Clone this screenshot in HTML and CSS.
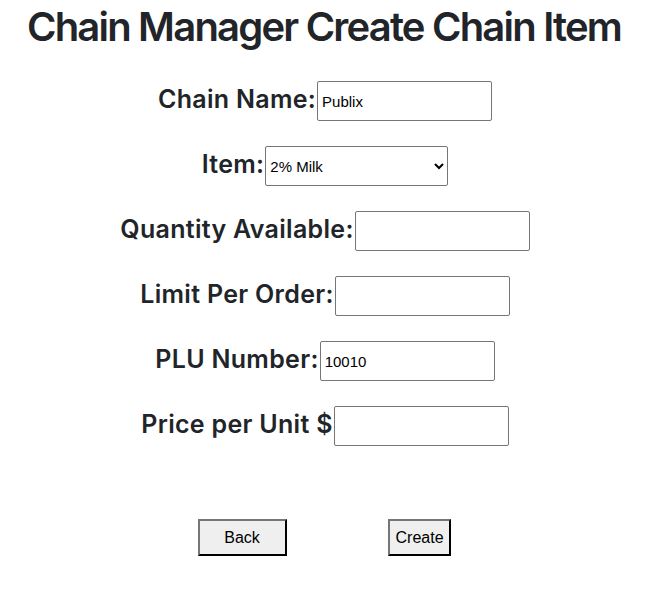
FILE: index.html
```html
<!DOCTYPE html>
<html>
<head>
<meta charset="utf-8">
<link rel="stylesheet" href="styles.css">
</head>
<body>
<div class="page">
  <h1 class="title">Chain Manager Create Chain Item</h1>
  <form class="form">
    <div class="row"><label class="lbl">Chain Name:</label><input class="field" type="text" value="Publix"></div>
    <div class="row"><label class="lbl">Item:</label><select class="select"><option>2% Milk</option></select></div>
    <div class="row"><label class="lbl">Quantity Available:</label><input class="field" type="text"></div>
    <div class="row"><label class="lbl">Limit Per Order:</label><input class="field" type="text"></div>
    <div class="row"><label class="lbl">PLU Number:</label><input class="field" type="text" value="10010"></div>
    <div class="row"><label class="lbl">Price per Unit $</label><input class="field" type="text"></div>
  </form>
  <div class="actions">
    <button class="btn btn-back" type="button">Back</button>
    <button class="btn btn-create" type="button">Create</button>
  </div>
</div>
</body>
</html>
```
FILE: styles.css
```css
html, body {
  margin: 0;
  padding: 0;
  background: #fff;
}
.page {
  width: 654px;
  font-family: Inter, "Noto Sans", sans-serif;
  color: #212529;
}
.title {
  margin: 0;
  padding-top: 3px;
  padding-right: 6px;
  text-align: center;
  font-size: 40px;
  font-weight: 600;
  line-height: 48px;
  letter-spacing: -1.8px;
}
.form {
  display: flex;
  flex-direction: column;
  gap: 25px;
  margin-top: 30px;
  align-items: center;
  padding-right: 4px;
}
.row {
  display: flex;
  align-items: center;
  justify-content: center;
  height: 40px;
}
.lbl {
  font-size: 25px;
  font-weight: 600;
  line-height: 29px;
  margin-top: -3px;
  letter-spacing: 0.3px;
}
.field {
  box-sizing: border-box;
  width: 175px;
  height: 40px;
  border: 1px solid #767676;
  border-radius: 2px;
  padding: 0 4px;
  font-family: "Liberation Sans", Arial, sans-serif;
  font-size: 15px;
  color: #000;
  margin: 0 0 0 1px;
}
.select {
  box-sizing: border-box;
  width: 183px;
  height: 40px;
  border: 1px solid #767676;
  border-radius: 2px;
  font-family: "Liberation Sans", Arial, sans-serif;
  font-size: 15px;
  color: #000;
  background: #fff;
  margin-left: 1px;
}
.actions {
  display: flex;
  justify-content: center;
  gap: 101px;
  margin-top: 73px;
  padding-right: 6px;
}
.btn {
  box-sizing: border-box;
  height: 37px;
  background: #efefef;
  border: 2px outset #767676;
  border-color: #767676 #222 #222 #767676;
  font-family: "Liberation Sans", Arial, sans-serif;
  font-size: 16px;
  color: #000;
  padding: 0 6px;
}
.btn-back {
  width: 89px;
}
.btn-create {
  width: 63px;
}
```
